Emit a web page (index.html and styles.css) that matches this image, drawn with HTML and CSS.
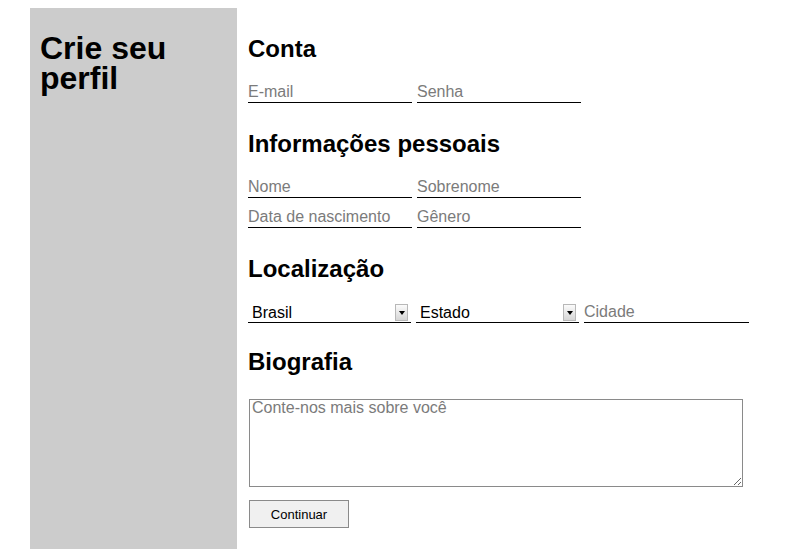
FILE: index.html
```html
<!DOCTYPE html>
<html lang="pt-BR">
<head>
<meta charset="utf-8">
<title>Crie seu perfil</title>
<link rel="stylesheet" href="styles.css">
</head>
<body>
<div class="page">
  <aside class="sidebar">
    <h1 class="title">Crie seu perfil</h1>
  </aside>
  <form class="form">
    <section class="section">
      <h2 class="heading">Conta</h2>
      <div class="row">
        <input class="field" type="text" placeholder="E-mail">
        <input class="field" type="password" placeholder="Senha">
      </div>
    </section>
    <section class="section">
      <h2 class="heading">Informações pessoais</h2>
      <div class="rows">
        <div class="row">
          <input class="field" type="text" placeholder="Nome">
          <input class="field" type="text" placeholder="Sobrenome">
        </div>
        <div class="row">
          <input class="field" type="text" placeholder="Data de nascimento">
          <input class="field" type="text" placeholder="Gênero">
        </div>
      </div>
    </section>
    <section class="section">
      <h2 class="heading">Localização</h2>
      <div class="row">
        <div class="select-wrap">
          <select class="select"><option>Brasil</option></select>
          <span class="arrow"></span>
        </div>
        <div class="select-wrap">
          <select class="select"><option>Estado</option></select>
          <span class="arrow"></span>
        </div>
        <input class="field field-wide" type="text" placeholder="Cidade">
      </div>
    </section>
    <section class="section section-bio">
      <h2 class="heading heading-bio">Biografia</h2>
      <textarea class="bio" placeholder="Conte-nos mais sobre você"></textarea>
      <button class="btn" type="button">Continuar</button>
    </section>
  </form>
</div>
</body>
</html>
```

FILE: styles.css
```css
* { box-sizing: border-box; }

body {
  margin: 0;
  background: #fff;
  font-family: "Liberation Sans", Arial, Helvetica, sans-serif;
  color: #000;
}

.page {
  width: 749px;
  margin: 8px auto 0;
  display: flex;
  gap: 11px;
}

.sidebar {
  width: 207px;
  height: 541px;
  flex: none;
  background: #cccccc;
  padding: 25px 10px 0;
}

.title {
  margin: 0;
  font-size: 32px;
  line-height: 30px;
  font-weight: bold;
}

.form {
  flex: 1;
  padding-top: 27px;
  display: flex;
  flex-direction: column;
  gap: 27px;
}

.section {
  display: flex;
  flex-direction: column;
}

.heading {
  margin: 0 0 19px;
  font-size: 24px;
  line-height: 28px;
  font-weight: bold;
}

.rows {
  display: flex;
  flex-direction: column;
  gap: 9px;
}

.row {
  display: flex;
  gap: 5px;
}

.field {
  width: 164px;
  height: 21px;
  border: none;
  border-bottom: 1px solid #000;
  padding: 0;
  margin: 0;
  font-family: "Liberation Sans", Arial, sans-serif;
  font-size: 16px;
  line-height: 20px;
  color: #000;
  background: #fff;
  outline: none;
}

.field::placeholder {
  color: #7b7b7b;
  opacity: 1;
}

.field-wide {
  width: 165px;
}

.select-wrap {
  position: relative;
  width: 163px;
  height: 21px;
}

.select {
  -webkit-appearance: none;
  appearance: none;
  width: 100%;
  height: 21px;
  border: none;
  border-bottom: 1px solid #000;
  border-radius: 0;
  padding: 0 0 0 4px;
  margin: 0;
  font-family: "Liberation Sans", Arial, sans-serif;
  font-size: 16px;
  color: #000;
  background: #fff;
  outline: none;
}

.arrow {
  position: absolute;
  right: 3px;
  top: 2px;
  width: 13px;
  height: 17px;
  border: 1px solid #b8b8b8;
  background: linear-gradient(#fbfbfb, #d6d6d6);
  pointer-events: none;
}

.arrow::after {
  content: "";
  position: absolute;
  left: 3px;
  top: 6px;
  border-left: 3px solid transparent;
  border-right: 3px solid transparent;
  border-top: 4px solid #000;
}

.section-bio {
  margin-top: -2px;
}

.section-bio .heading-bio {
  margin-bottom: 23px;
}

.bio {
  display: block;
  width: 494px;
  height: 88px;
  margin: 0 0 0 1px;
  padding: 0 2px;
  border: 1px solid #8a8a8a;
  font-family: "Liberation Sans", Arial, sans-serif;
  font-size: 16px;
  line-height: 16px;
  color: #000;
  outline: none;
}

.bio::placeholder {
  color: #7b7b7b;
  opacity: 1;
}

.btn {
  align-self: flex-start;
  margin: 13px 0 0 1px;
  width: 100px;
  height: 28px;
  padding: 0;
  border: 1px solid #8a8a8a;
  border-radius: 0;
  background: #f0f0f0;
  font-family: "Liberation Sans", Arial, sans-serif;
  font-size: 13px;
  color: #000;
}
```
